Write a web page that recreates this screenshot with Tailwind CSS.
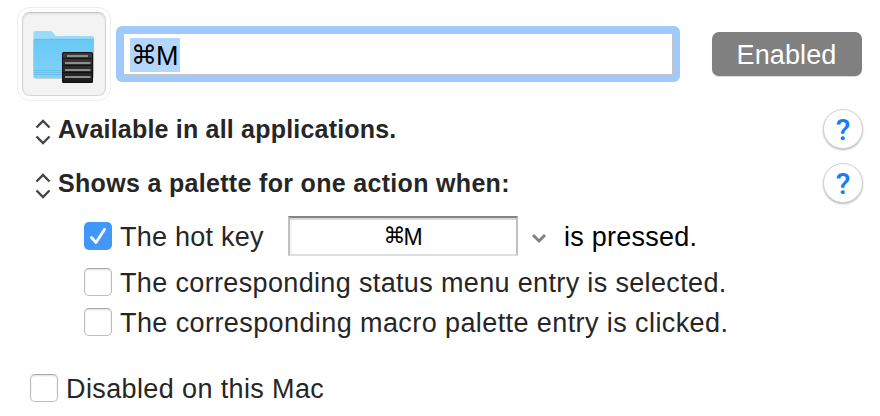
<!DOCTYPE html>
<html lang="en">
<head>
<meta charset="utf-8">
<title>Macro group</title>
<script src="https://cdn.jsdelivr.net/npm/@tailwindcss/browser@4"></script>
</head>
<body class="bg-white">
<main class="w-[880px] h-[416px] overflow-hidden bg-white pl-[17px] pr-[17px] pt-[7px] font-['Liberation_Sans','DejaVu_Sans',sans-serif] text-[27px] leading-[30px] text-[#262626] whitespace-nowrap">
  <header class="flex h-[94px]">
    <div class="w-[94px] h-[94px] shrink-0 rounded-[13px] border border-[#ececec] p-1">
      <div class="w-[84px] h-[84px] rounded-[8px] border border-[#d4d4d4] border-t-[#c4c4c4] bg-[#f3f3f3] shadow-[inset_0_1px_2px_#dedede]">
        <svg class="block w-[82px] h-[82px]" viewBox="23 13 82 82">
          <defs>
            <linearGradient id="folder" x1="0" y1="0" x2="0" y2="1"><stop offset="0" stop-color="#69c8f4"/><stop offset="1" stop-color="#80d2fa"/></linearGradient>
            <linearGradient id="panel" x1="0" y1="0" x2="0" y2="1"><stop offset="0" stop-color="#3a3a3a"/><stop offset="1" stop-color="#1c1c1c"/></linearGradient>
          </defs>
          <path d="M33.500 77V33.500Q33.500 31 36 31H50Q52 31 53 32.500L54.500 35Q55.500 36 57 36H92Q94 36 94 38V77Q94 79 92 79H36Q33.500 79 33.500 77Z" fill="#000" opacity=".15"/>
          <path d="M33.500 76V33.500Q33.500 31 36 31H50Q52 31 53 32.500L54.500 35Q55.500 36 57 36H92Q94 36 94 38V76Q94 78 92 78H36Q33.500 78 33.500 76Z" fill="#98dcfb"/>
          <path d="M33.500 41Q33.500 39 35.500 39H92Q94 39 94 41V76Q94 78 92 78H35.500Q33.500 78 33.500 76Z" fill="url(#folder)"/>
          <path d="M34 39.300H94M34 70.500H94M34 72.500H94M34 74.500H94" stroke="#58b5e2" stroke-width=".7" opacity=".7"/>
          <rect x="62" y="52" width="31" height="31" rx="1.500" fill="#101010"/>
          <rect x="63" y="53" width="29" height="29" rx="1" fill="url(#panel)"/>
          <path d="M63 58.500H92M63 65.500H92M63 72.500H92" stroke="#111" stroke-width="1"/>
          <path d="M67 56H88M65 63H90.500M65 70H90.500M65 77H90.500" stroke="#8d8d8d" stroke-width="2"/>
        </svg>
      </div>
    </div>
    <div class="ml-[5px] mt-[19px] w-[564px] h-14 rounded-[6px] bg-[#a0c9fc] p-[7px]">
      <div class="flex items-center h-[42px] w-[550px] border border-[#c3c3c3] bg-white pl-[6px] pt-px">
        <span class="flex items-center w-[50px] h-[34px] bg-[#b3d6fe] text-black pl-px"><span class="w-[25px] text-[26px] font-['DejaVu_Sans']">⌘</span><span class="pt-[2px]">M</span></span>
      </div>
    </div>
    <button class="ml-[32px] mt-[25px] w-[150px] h-11 rounded-[7px] bg-[#808080] text-white tracking-[0.1px] shadow-[0_1px_1px_#d8d8d8] pt-px pr-px">Enabled</button>
  </header>

  <section class="mt-2 flex flex-col gap-[14px] text-[25px] font-bold">
    <div class="flex items-center h-10 pl-[18px]">
      <svg class="w-4 h-[26px] mt-[5px]" viewBox="0 0 16 26" fill="none" stroke="#444" stroke-width="2.400"><path d="M1.500 8.500 8 2l6.500 6.500M1.500 17.500 8 24l6.500-6.500"/></svg>
      <span class="ml-[7px] tracking-[0.2px]">Available in all applications.</span>
      <span class="ml-auto w-10 h-10 rounded-full border border-[#d2d2d2] bg-white shadow-[0_1px_2px_#bbb] text-[#147cfd] font-['Roboto'] font-medium text-[30px] leading-[40px] text-center">?</span>
    </div>
    <div class="flex items-center h-10 pl-[18px]">
      <svg class="w-4 h-[26px] mt-[5px]" viewBox="0 0 16 26" fill="none" stroke="#444" stroke-width="2.400"><path d="M1.500 8.500 8 2l6.500 6.500M1.500 17.500 8 24l6.500-6.500"/></svg>
      <span class="ml-[7px] tracking-[0.32px]">Shows a palette for one action when:</span>
      <span class="ml-auto w-10 h-10 rounded-full border border-[#d2d2d2] bg-white shadow-[0_1px_2px_#bbb] text-[#147cfd] font-['Roboto'] font-medium text-[30px] leading-[40px] text-center">?</span>
    </div>
  </section>

  <section class="mt-[13px] pl-[67px] tracking-[0.35px]">
    <div class="flex items-center h-10 tracking-[0.25px]">
      <span class="w-7 h-7 rounded-[5px] bg-[#4198fa]"><svg class="block w-7 h-7" viewBox="0 0 28 28" fill="none" stroke="#fff" stroke-width="2.800" stroke-linecap="round" stroke-linejoin="round"><path d="m7.500 15.500 4.500 5L20.500 7.500"/></svg></span>
      <span class="ml-2 pt-px w-[168px]">The hot key</span>
      <div class="flex items-center justify-center w-[230px] h-10 border-2 border-[#c0c0c0] border-t-[#858585] border-b-[#dedede] shadow-[inset_0_2px_0_#d8d8d8,inset_2px_0_0_#f5f5f5] text-black tracking-normal"><span class="w-[20px] text-[22px] font-['DejaVu_Sans']">⌘</span><span class="text-[23px] pt-px">M</span></div>
      <svg class="ml-[13px] w-4 h-4 mt-[3px]" viewBox="0 0 16 16" fill="none" stroke="#808080" stroke-width="3"><path d="m2 5 6 6 6-6"/></svg>
      <span class="ml-[17px] pt-px text-black">is pressed.</span>
    </div>
    <div class="mt-3 flex h-7">
      <span class="w-7 h-7 rounded-[5px] border border-[#bdbdbd] border-t-[#aaa] shadow-[inset_0_1px_2px_#ddd]"></span>
      <span class="ml-2">The corresponding status menu entry is selected.</span>
    </div>
    <div class="mt-3 flex h-7">
      <span class="w-7 h-7 rounded-[5px] border border-[#bdbdbd] border-t-[#aaa] shadow-[inset_0_1px_2px_#ddd]"></span>
      <span class="ml-2 tracking-[0.41px]">The corresponding macro palette entry is clicked.</span>
    </div>
  </section>

  <div class="mt-[38px] ml-[13px] flex h-7 tracking-[0.38px]">
    <span class="w-7 h-7 rounded-[5px] border border-[#bdbdbd] border-t-[#aaa] shadow-[inset_0_1px_2px_#ddd]"></span>
    <span class="ml-2">Disabled on this Mac</span>
  </div>
</main>
</body>
</html>
